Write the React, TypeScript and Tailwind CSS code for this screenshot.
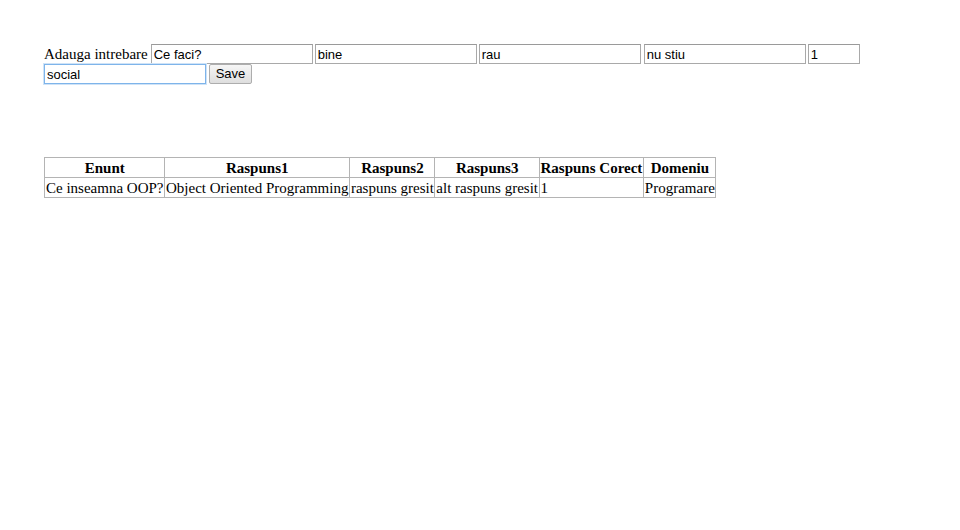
import React, { useState } from 'react';

const serif = 'font-["Liberation_Serif","Times_New_Roman",serif]';
const inputCls =
    'h-[20px] w-[162px] border border-[#a9a9a9] border-t-[#9a9a9a] bg-white px-[2px] text-[13px] text-black font-["Liberation_Sans",Arial,sans-serif] outline-none leading-[16px]';

const rows = [
    {
        enunt: 'Ce inseamna OOP?',
        r1: 'Object Oriented Programming',
        r2: 'raspuns gresit',
        r3: 'alt raspuns gresit',
        corect: '1',
        domeniu: 'Programare',
    },
];

export default function App() {
    const [form, setForm] = useState({
        enunt: 'Ce faci?',
        r1: 'bine',
        r2: 'rau',
        r3: 'nu stiu',
        corect: '1',
        domeniu: 'social',
    });

    const set = (k: keyof typeof form) => (e: React.ChangeEvent<HTMLInputElement>) =>
        setForm({ ...form, [k]: e.target.value });

    const th = 'border border-[#b4b4b4] pl-[1px] pr-[0.5px] h-[20px] font-bold text-center leading-[18px] whitespace-nowrap';
    const td = 'border border-[#b4b4b4] pl-[1px] pr-[0.5px] h-[20px] text-left leading-[18px] whitespace-nowrap';

    return (
        <div className={`min-h-[530px] w-[960px] bg-white text-black text-[15px] ${serif} pl-[44px] pt-[44px]`}>
            <div className="flex items-center">
                <span className="mr-[3px] leading-[20px] whitespace-nowrap">Adauga intrebare</span>
                <input className={`${inputCls} mr-[2px]`} value={form.enunt} onChange={set('enunt')} />
                <input className={`${inputCls} mr-[2px]`} value={form.r1} onChange={set('r1')} />
                <input className={`${inputCls} mr-[3px]`} value={form.r2} onChange={set('r2')} />
                <input className={`${inputCls} mr-[2px]`} value={form.r3} onChange={set('r3')} />
                <input className={`${inputCls} !w-[52px]`} value={form.corect} onChange={set('corect')} />
            </div>
            <div className="flex items-center">
                <input
                    className={`${inputCls} !border-[#7eb4ea] shadow-[0_0_0_1px_#cfe3f7]`}
                    value={form.domeniu}
                    onChange={set('domeniu')}
                />
                <button className='ml-[3px] h-[20px] w-[43px] rounded-[2px] border border-[#adadad] bg-gradient-to-b from-[#f6f6f6] to-[#dedede] text-[13px] leading-[16px] font-["Liberation_Sans",Arial,sans-serif]'>
                    Save
                </button>
            </div>

            <table className="mt-[73px] border-collapse border border-[#b4b4b4]">
                <thead>
                    <tr>
                        <th className={th}>Enunt</th>
                        <th className={th}>Raspuns1</th>
                        <th className={th}>Raspuns2</th>
                        <th className={th}>Raspuns3</th>
                        <th className={th}>Raspuns Corect</th>
                        <th className={th}>Domeniu</th>
                    </tr>
                </thead>
                <tbody>
                    {rows.map((r, i) => (
                        <tr key={i}>
                            <td className={td}>{r.enunt}</td>
                            <td className={td}>{r.r1}</td>
                            <td className={td}>{r.r2}</td>
                            <td className={td}>{r.r3}</td>
                            <td className={td}>{r.corect}</td>
                            <td className={td}>{r.domeniu}</td>
                        </tr>
                    ))}
                </tbody>
            </table>
        </div>
    );
}
